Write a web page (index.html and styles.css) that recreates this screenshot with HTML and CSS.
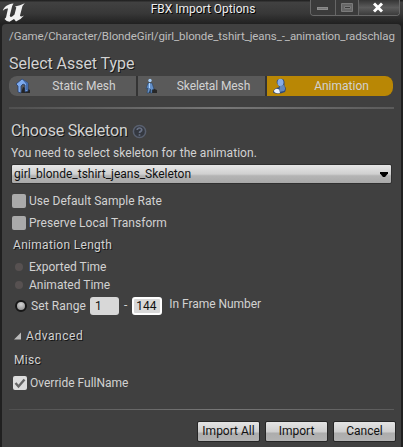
FILE: index.html
```html
<!DOCTYPE html>
<html lang="en">
<head>
<meta charset="utf-8">
<title>FBX Import Options</title>
<link rel="stylesheet" href="styles.css">
</head>
<body>
<div class="window">
  <header class="titlebar">
    <svg class="logo" viewBox="0 0 24 20"><path d="M.8 8.800C2 4.500 6 2 11.500 1.500L10.200 4L7.800 13.500Q8 15.800 10.500 14.300L12.500 12.500L14.300 5.500L13 4.500Q18 3.500 22.800 1.300L20.500 4L18 13.500Q18.300 15.500 22 13.500Q19 17.500 14 19.500L12 17L7.500 19.800Q4.500 19.500 2.500 17L4 15.500L6 6.500Q3.500 6 .8 8.800Z" fill="#f2f2f2"/></svg>
    <h1 class="title">FBX Import Options</h1>
    <div class="controls">
      <span class="ctl"><svg viewBox="0 0 24 15"><rect x="6.500" y="7.500" width="10" height="2" fill="#777" stroke="#8b8b8b"/></svg></span>
      <span class="ctl"><svg viewBox="0 0 22 15"><path d="M5.500 3.500h11v8h-11zM8.500 6.500h6v2h-6z" fill="#666" fill-rule="evenodd" stroke="#7b7b7b"/></svg></span>
      <span class="ctl close"><svg viewBox="0 0 40 15"><path d="M15 3.500l8 8M23 3.500l-8 8" stroke="#fff" stroke-width="2.900"/></svg></span>
    </div>
  </header>
  <main class="panel">
    <p class="path">/Game/Character/BlondeGirl/girl_blonde_tshirt_jeans_-_animation_radschlag</p>
    <h2 class="heading">Select Asset Type</h2>
    <div class="tabs">
      <div class="tab"><svg viewBox="0 0 16 16"><path d="M8 9l7 3v3H6z" fill="#252525"/><path d="M1 6l6-5 6 4v8l-3 1V7L8 6 6 8v7l-3-1V8z" fill="#7eabef" stroke="#263d67" stroke-width=".8"/><path d="M7 1l6 4v8l-2-1V6z" fill="#456eae"/></svg><span class="static">Static Mesh</span></div>
      <div class="tab"><svg viewBox="0 0 16 16"><path d="M8 10l5 2v3H4z" fill="#272727"/><circle cx="6" cy="2.500" r="1.700" fill="#a7cdf5"/><path d="M4 5h4l2 6-2 1v3H6.500v-4L5 15H3l1-5-2 1z" fill="#638fc8" stroke="#294363" stroke-width=".6"/><path d="M5 5h1v5H5z" fill="#add5ff"/></svg><span class="skeletal">Skeletal Mesh</span></div>
      <div class="tab active"><svg viewBox="0 0 16 16"><path d="M5 1.500Q11-1 11.500 4v4q2.500 2 .5 6-6 3-11.500 1-1.500-3 3-5l3-1-2.500-3.500q-1-3 1-4z" fill="#304a78"/><ellipse cx="7.500" cy="4.500" rx="3" ry="3.800" fill="#88ade7"/><path d="M7 8l4-1q2 4 0 6l-5 1z" fill="#6388bd"/><path d="M1 12.500q2-3 5-1l1 3.500q-6 1-6-2.500z" fill="#edf4ff"/></svg><span class="animation">Animation</span></div>
    </div>
    <div class="rule top-rule"></div>
    <section class="options">
      <div class="choose"><h2>Choose Skeleton</h2><svg class="help" viewBox="0 0 15 15"><circle cx="7.500" cy="7.500" r="6.100" fill="#343840" stroke="#59606f" stroke-width="1.500"/><path d="M5.200 6q.2-2 2.300-2t2.300 1.800Q9.800 7 8.400 7.600q-.9.400-.9 1.400M7.500 10.300v1.500" fill="none" stroke="#697184" stroke-width="1.700"/></svg></div>
      <p class="note">You need to select skeleton for the animation.</p>
      <div class="combo"><span>girl_blonde_tshirt_jeans_Skeleton</span><svg viewBox="0 0 8 5"><path d="M0 0h8v1.500L5 5H3L0 1.500z"/></svg></div>
      <div class="check first"><i class="box"></i><span class="sample">Use Default Sample Rate</span></div>
      <div class="check"><i class="box"></i><span class="preserve">Preserve Local Transform</span></div>
      <div class="label length">Animation Length</div>
      <div class="radio"><i class="dot"></i><span class="exported">Exported Time</span></div>
      <div class="radio"><i class="dot"></i><span class="animated">Animated Time</span></div>
      <div class="range"><i class="dot on"></i><span class="set">Set Range</span><b class="num">1</b><span class="dash">-</span><b class="num focus">144</b><span class="frames">In Frame Number</span></div>
      <div class="label advanced"><svg viewBox="0 0 8 8"><path d="M8 0v8H0z" fill="#bbb"/></svg><span>Advanced</span></div>
      <div class="label misc">Misc</div>
      <div class="check override-row"><i class="box checked"><svg viewBox="0 0 14 14"><path d="M2.500 7l3 3.500 6-7" fill="none" stroke="#666" stroke-width="2.400"/></svg></i><span class="override">Override FullName</span></div>
    </section>
    <div class="rule bottom-rule"></div>
    <footer class="buttons"><div class="button all"><span>Import All</span></div><div class="button import"><span>Import</span></div><div class="button cancel"><span>Cancel</span></div></footer>
  </main>
</div>
</body>
</html>
```
FILE: styles.css
```css
* { box-sizing: border-box; }
body { margin: 0; font: 12px/16px Roboto, sans-serif; color: #d2d2d2; background: #1f1f1f; overflow: hidden; }
h1, h2, p { margin: 0; font-weight: 400; }
svg { display: block; flex: none; }
.window { width: 403px; height: 447px; padding: 0 2px; background: #202020; }
.titlebar { height: 24px; display: grid; grid-template-columns: 107px 1fr 107px; margin: 0 -2px; padding: 0 2px; background: linear-gradient(#1c1c1c, #414141 10%, #383838 55%, #202020); }
.logo { width: 24px; height: 20px; margin-top: 2px; }
.title { padding-left: 3px; font-size: 12px; line-height: 19px; color: #eee; text-align: center; white-space: nowrap; text-shadow: 1px 1px #000; }
.controls { display: flex; width: 90px; height: 16px; margin-left: 16px; border: 1px solid #686868; border-top: 0; border-radius: 0 0 4px 4px; overflow: hidden; }
.ctl { width: 25px; border-right: 1px solid #666; background: #3b3b3b; }
.ctl:nth-child(2) { width: 23px; }
.ctl.close { width: 40px; border: 0; background: linear-gradient(#353535, #5c5c5c 50%, #3c3c3c); }
.ctl svg { height: 15px; width: 100%; }
.panel { height: 423px; background: #404040; border-radius: 4px 4px 0 0; padding: 0 7px; }
.path { height: 24px; line-height: 24px; white-space: nowrap; font-size: 11.5px; letter-spacing: -.09px; color: #bdbdbd; }
.heading { height: 28px; line-height: 31px; font-size: 16px; letter-spacing: -.05px; text-shadow: 1px 1px #161616; }
.tabs { display: flex; gap: 2px; width: 384px; height: 20px; background: #343434; border-radius: 8px; overflow: hidden; }
.tab { width: 127px; display: flex; align-items: center; background: #5a5a5a; padding-left: 6px; }
.tab svg { width: 16px; height: 16px; }
.tab span { flex: 1; text-align: center; padding-left: 1px; }
.tab .skeletal { padding-left: 2px; letter-spacing: -.1px; }
.tab.active { flex: 1; background: #b98705; }
.rule { height: 2px; background: linear-gradient(90deg, #505050, #777 55%, #5b5b5b); }
.top-rule { margin: 11px 0 9px; }
.options { padding: 0 2px; }
.choose { display: flex; align-items: center; gap: 4px; height: 25px; }
.choose h2 { line-height: 20px; font-size: 16px; letter-spacing: -.2px; text-shadow: 1px 1px #161616; }
.help { width: 15px; height: 15px; margin-top: 2px; }
.note { height: 21px; line-height: 20px; letter-spacing: .05px; }
.combo { height: 20px; display: flex; justify-content: space-between; align-items: center; padding: 0 3px 0 2px; color: #111; border: 1px solid #303030; border-radius: 2px; background: linear-gradient(#e6e6e6, #d0d0d0 50%, #b4b4b4 60%, #a9a9a9); }
.combo svg { width: 8px; height: 5px; }
.check { height: 22px; display: flex; align-items: center; gap: 3px; padding-left: 1px; letter-spacing: .04px; }
.first { margin-top: 6px; }
.box { display: block; width: 14px; height: 14px; background: #aaa; border-radius: 2px; }
.checked { background: #ddd; }
.label { height: 22px; display: flex; align-items: center; text-shadow: 1px 1px #151515; }
.length { padding-left: 2px; margin-bottom: 2px; letter-spacing: .3px; }
.radio { height: 18px; display: flex; align-items: center; padding-left: 4px; gap: 6px; }
.dot { display: block; width: 8px; height: 8px; border-radius: 50%; background: #575151; }
.range { height: 24px; display: flex; align-items: center; padding-left: 4px; }
.dot.on { width: 12px; height: 12px; margin-right: 4px; border: 2px solid #171717; background: radial-gradient(circle at 50% 30%, #d5d5d5, #858585); }
.set { letter-spacing: .1px; }
.num { width: 29px; height: 18px; margin-left: 4px; padding-left: 5px; border-radius: 3px; background: #d8d8d8; color: #111; font-weight: 400; line-height: 18px; }
.focus { width: 30px; margin-left: 5px; padding-left: 2px; line-height: 14px; border: 2px solid #fff; }
.dash { margin-left: 5px; margin-bottom: 3px; }
.frames { margin: 0 0 4px 7px; letter-spacing: -.04px; }
.advanced { margin-top: 7px; gap: 5px; padding-left: 3px; letter-spacing: .55px; }
.advanced svg { width: 7px; height: 8px; }
.misc { margin-top: 2px; padding-left: 3px; letter-spacing: .3px; }
.override-row { height: 24px; padding-left: 2px; letter-spacing: 0; }
.bottom-rule { height: 1px; margin: 14px 0 11px; }
.buttons { display: flex; justify-content: flex-end; gap: 5px; margin-right: -2px; }
.button { width: 63px; height: 21px; text-align: center; line-height: 19px; color: #111; border: 1px solid #262626; border-radius: 2px; background: linear-gradient(#e4e4e4, #cfcfcf 50%, #adadad 60%, #b3b3b3); }
```
